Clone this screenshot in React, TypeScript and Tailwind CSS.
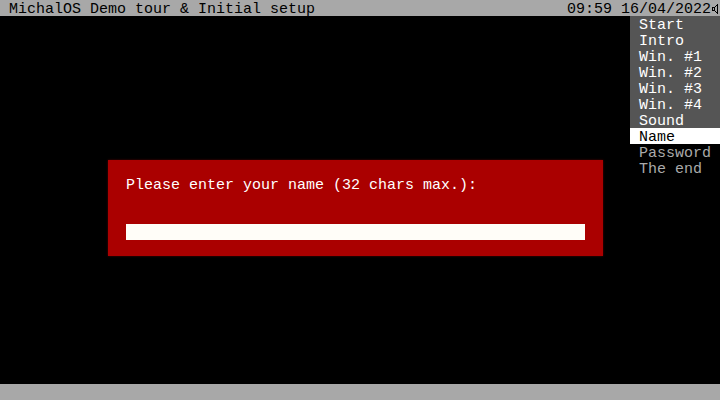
const menu = ["Start", "Intro", "Win. #1", "Win. #2", "Win. #3", "Win. #4", "Sound"];

function Speaker() {
  return (
    <svg width="9" height="16" viewBox="0 0 9 16" className="block">
      <path
        d="M1.5 7.5 H3.5 L6.5 4.5 V13.5 L3.5 10.5 H1.5 Z M3.5 7.5 V10.5"
        fill="none"
        stroke="#000"
        strokeWidth="1"
        shapeRendering="crispEdges"
      />
    </svg>
  );
}

export default function App() {
  return (
    <div className="w-[720px] h-[400px] flex flex-col bg-black font-['Liberation_Mono',monospace] text-[15px] leading-4 overflow-hidden">
      <div className="h-4 bg-[#a8a8a8] text-black flex whitespace-pre">
        <span className="pl-[9px] pt-[2px] flex-1">MichalOS Demo tour &amp; Initial setup</span>
        <span className="pt-[2px]">09:59 16/04/2022</span>
        <Speaker />
      </div>

      <div className="flex-1 flex">
        <div className="flex-1 pl-[108px] pt-[144px]">
          <div className="w-[495px] h-[96px] bg-[#aa0000] pl-[18px] pt-4 text-white whitespace-pre shadow-[0_0_2px_#550000]">
            <div className="h-4 pt-[2px]">Please enter your name (32 chars max.):</div>
            <div className="h-4 w-[459px] mt-8 bg-[#fffdf8]" />
          </div>
        </div>

        <div className="w-[90px] flex flex-col whitespace-pre">
          {menu.map((m) => (
            <div key={m} className="h-4 pl-[9px] pt-[2px] bg-[#555555] text-white">
              {m}
            </div>
          ))}
          <div className="h-4 pl-[9px] pt-[2px] bg-white text-black">Name</div>
          <div className="h-4 pl-[9px] pt-[2px] text-[#aaaaaa]">Password</div>
          <div className="h-4 pl-[9px] pt-[2px] text-[#aaaaaa]">The end</div>
        </div>
      </div>

      <div className="h-4 bg-[#a8a8a8]" />
    </div>
  );
}
